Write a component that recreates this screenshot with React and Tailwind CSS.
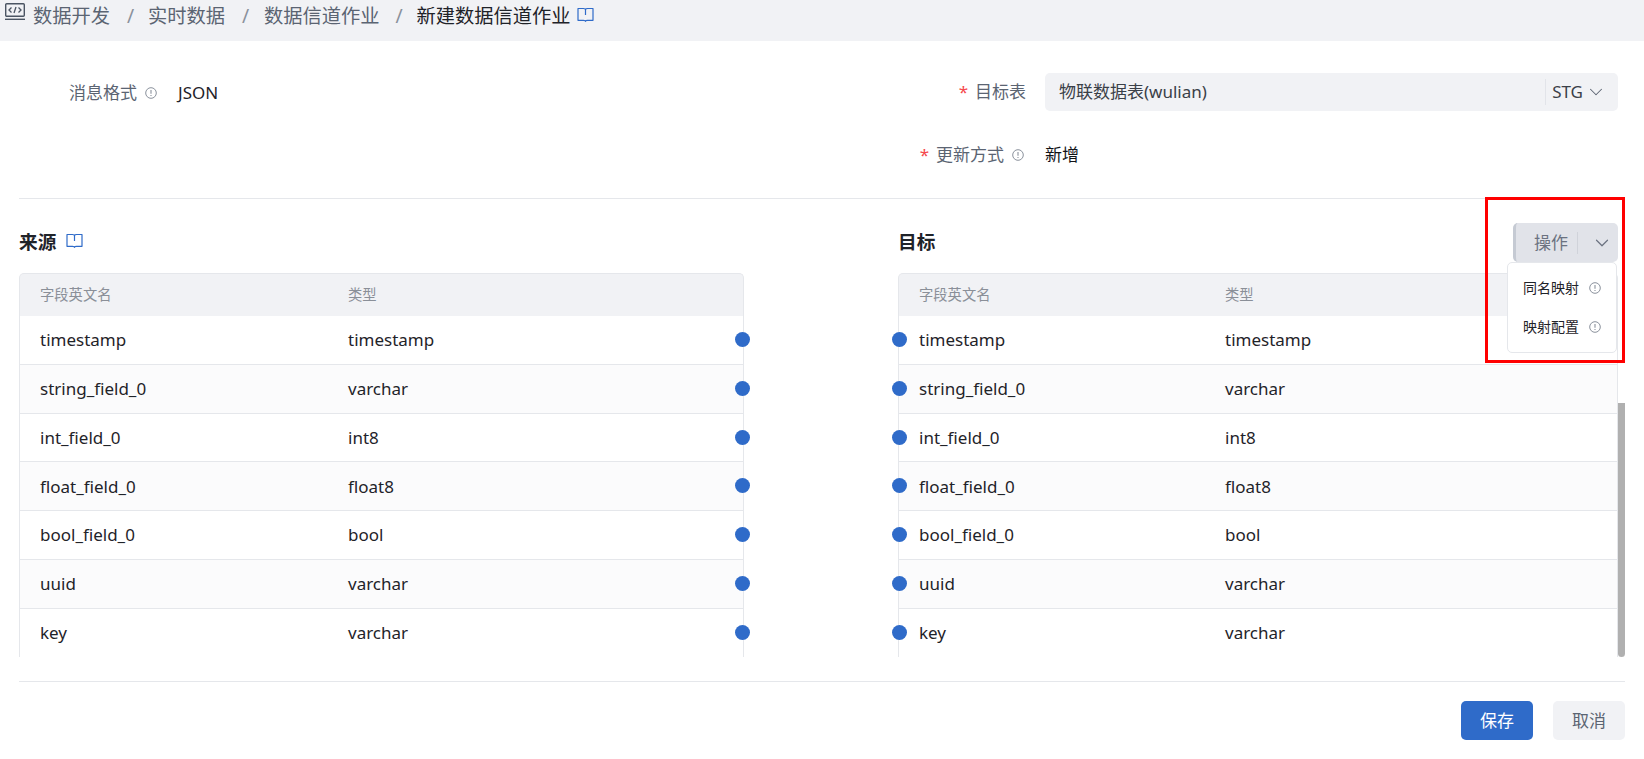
import React from 'react';
import { ChevronDown } from 'lucide-react';

const sourceFields = [
  ['timestamp', 'timestamp'],
  ['string_field_0', 'varchar'],
  ['int_field_0', 'int8'],
  ['float_field_0', 'float8'],
  ['bool_field_0', 'bool'],
  ['uuid', 'varchar'],
  ['key', 'varchar'],
];

// small circled "!" next to labels
function InfoIcon({ className }) {
  return (
    <svg viewBox="0 0 12 12" fill="none" className={className}>
      <circle cx="6" cy="6" r="5.300" stroke="currentColor" strokeWidth="1" />
      <path d="M6 3v3.800" stroke="currentColor" strokeWidth="1.100" />
      <path d="M6 8v1" stroke="currentColor" strokeWidth="1.100" />
    </svg>
  );
}

function BookIcon({ className }) {
  return (
    <svg viewBox="0 0 17 16" fill="none" className={className}>
      <path
        d="M1 1.500h5.500c1 0 2 .2 2 1 0-.8 1-1 2-1H16v11.800h-5.500c-1 0-2 .2-2 1 0-.8-1-1-2-1H1z"
        stroke="currentColor"
        strokeWidth="1.200"
        strokeLinejoin="round"
      />
      <path d="M8.500 2.500v5.500" stroke="currentColor" strokeWidth="1.200" />
    </svg>
  );
}

function CodeScreenIcon() {
  return (
    <svg viewBox="0 0 20 18" fill="none" className="w-5 h-[18px] shrink-0 text-[#4b5563]">
      <rect x="0.700" y="0.700" width="18.600" height="12.600" rx="1" stroke="currentColor" strokeWidth="1.400" />
      <path d="M0 16.300h20" stroke="currentColor" strokeWidth="1.400" />
      <path d="M6.500 4.500L4 7l2.500 2.500M13.500 4.500L16 7l-2.500 2.500M11 4l-2 6" stroke="currentColor" strokeWidth="1.300" />
    </svg>
  );
}

function Breadcrumb() {
  return (
    <div className="h-[41px] shrink-0 bg-[#f1f2f5] flex items-start pl-[5px] pt-[3px] text-[19.250px] leading-[26px] text-[#5b6472]">
      <CodeScreenIcon />
      <span className="ml-[8px]">数据开发</span>
      <span className="ml-[17px] w-[21px] text-[#8a919c]">/</span>
      <span>实时数据</span>
      <span className="ml-[17px] w-[22px] text-[#8a919c]">/</span>
      <span>数据信道作业</span>
      <span className="ml-[16px] w-[21px] text-[#8a919c]">/</span>
      <span className="text-[#1f2329]">新建数据信道作业</span>
      <BookIcon className="w-[17px] h-[16px] ml-[6px] mt-[4px] text-[#2f6bc9]" />
    </div>
  );
}

function FormSection() {
  return (
    <div className="h-[158px] shrink-0 border-b border-[#e5e7eb] flex justify-between text-[17px] leading-[24px]">
      <div className="pl-[50px] pt-[40px] flex items-start">
        <span className="text-[#5b6472]">消息格式</span>
        <InfoIcon className="w-3 h-3 ml-[8px] mt-[6px] text-[#8a919c]" />
        <span className="ml-[21px] text-[#1f2329]">JSON</span>
      </div>
      <div className="w-[705px] pt-[32px] pr-[7px] flex flex-col">
        <div className="flex items-center h-[38px]">
          <div className="w-[125px] flex justify-end items-center pr-[19px] text-[#5b6472]">
            <span className="text-[#f5484d] mr-[7px]">*</span>
            目标表
          </div>
          <div className="flex-1 h-full bg-[#f1f2f5] rounded-[5px] flex items-center pl-[14px] pr-[11px] text-[#3a4048]">
            <span className="flex-1">物联数据表(wulian)</span>
            <span className="h-[26px] border-l border-[#e2e4e9] pl-[6px] flex items-center">STG</span>
            <ChevronDown className="w-[22px] h-[22px] ml-[2px] text-[#5b6472]" strokeWidth={1.100} />
          </div>
        </div>
        <div className="flex items-center h-[24px] mt-[32px]">
          <div className="w-[125px] flex justify-end items-center pr-[21px] whitespace-nowrap">
            <span className="text-[#f5484d] mr-[7px]">*</span>
            <span className="text-[#5b6472]">更新方式</span>
            <InfoIcon className="w-3 h-3 ml-[8px] shrink-0 text-[#8a919c]" />
          </div>
          <span className="text-[#111318]">新增</span>
        </div>
      </div>
    </div>
  );
}

function FieldTable({ side, typeWidth }) {
  return (
    <div className="h-[384px] overflow-y-clip">
      <div className="h-[43px] bg-[#f1f2f5] border border-b-0 border-[#e5e7eb] rounded-t-[5px] flex items-center text-[14.300px] text-[#8a8f98]">
        <span className={`${typeWidth} pl-[20px]`}>字段英文名</span>
        <span>类型</span>
      </div>
      {sourceFields.map(([name, type], i) => (
        <div
          key={name}
          className={`relative h-[48.830px] border-x border-b border-[#e5e7eb] flex items-center text-[17px] text-[#1f2329] ${
            i % 2 === 1 ? 'bg-[#fbfbfc]' : 'bg-white'
          }`}
        >
          <span className={`${typeWidth} pl-[20px]`}>{name}</span>
          <span>{type}</span>
          {side === 'left' ? (
            <span className="absolute right-[-7px] top-[16px] w-[15px] h-[15px] rounded-full bg-[#2f6bc9]" />
          ) : (
            <span className="absolute left-[-7px] top-[16px] w-[15px] h-[15px] rounded-full bg-[#2f6bc9]" />
          )}
        </div>
      ))}
    </div>
  );
}

function ActionMenu() {
  return (
    <div className="relative">
      <div className="w-[105px] h-[39px] bg-[#e1e3e9] border-l-[3px] border-[#c5cad3] rounded-[5px] flex items-center text-[17px] text-[#6b7280]">
        <span className="ml-[18px]">操作</span>
        <span className="w-px h-[22px] bg-[#d0d3da] ml-[9px]" />
        <ChevronDown className="w-[22px] h-[22px] ml-[13px]" strokeWidth={1.300} />
      </div>
      <div className="absolute z-10 top-[39px] right-[1px] w-[110px] h-[91px] bg-white border border-[#e5e7eb] rounded-[5px] flex flex-col pt-[5px] pl-[15px] text-[14px] text-[#1f2329]">
        <div className="h-[39px] flex items-center">
          同名映射
          <InfoIcon className="w-3 h-3 ml-[10px] text-[#8a919c]" />
        </div>
        <div className="h-[39px] flex items-center">
          映射配置
          <InfoIcon className="w-3 h-3 ml-[10px] text-[#8a919c]" />
        </div>
      </div>
    </div>
  );
}

function MappingSection() {
  return (
    <div className="flex shrink-0 border-b border-[#e5e7eb] h-[483px]">
      <div className="w-[725px] shrink-0">
        <div className="h-[74px] flex items-start pt-[30px]">
          <h3 className="text-[18.670px] leading-[26px] font-bold text-[#1f2329]">来源</h3>
          <BookIcon className="w-[17px] h-[16px] ml-[10px] mt-[4px] text-[#2f6bc9]" />
        </div>
        <FieldTable side="left" typeWidth="w-[328px]" />
      </div>
      <div className="w-[720px] ml-[154px] shrink-0">
        <div className="h-[74px] flex items-start justify-between pt-[24px]">
          <h3 className="text-[18.670px] leading-[26px] font-bold text-[#1f2329] mt-[6px]">目标</h3>
          <ActionMenu />
        </div>
        <FieldTable side="right" typeWidth="w-[326px]" />
      </div>
      <div className="w-[7px] h-[458px] flex flex-col justify-end">
        <div className="h-[254px] bg-[#b0b0b0] rounded-b-[4px]" />
      </div>
    </div>
  );
}

export default function App() {
  return (
    <div
      className="relative w-full h-[759px] overflow-hidden bg-white flex flex-col"
      style={{ fontFamily: '"Noto Sans", "Noto Sans CJK SC", sans-serif' }}
    >
      <Breadcrumb />
      <div className="flex-1 flex flex-col px-[19px]">
        <FormSection />
        <MappingSection />
        <div className="flex justify-end gap-[20px] mt-[19px]">
          <button className="w-[72px] h-[39px] rounded-[5px] bg-[#2f6bc9] text-white text-[17px]">保存</button>
          <button className="w-[72px] h-[39px] rounded-[5px] bg-[#f1f2f5] text-[#5b6472] text-[17px]">取消</button>
        </div>
      </div>
      {/* red annotation box from the screenshot */}
      <div className="absolute left-[1485px] top-[197px] w-[140px] h-[166px] border-[3px] border-[#ff0000] z-20 pointer-events-none" />
    </div>
  );
}
